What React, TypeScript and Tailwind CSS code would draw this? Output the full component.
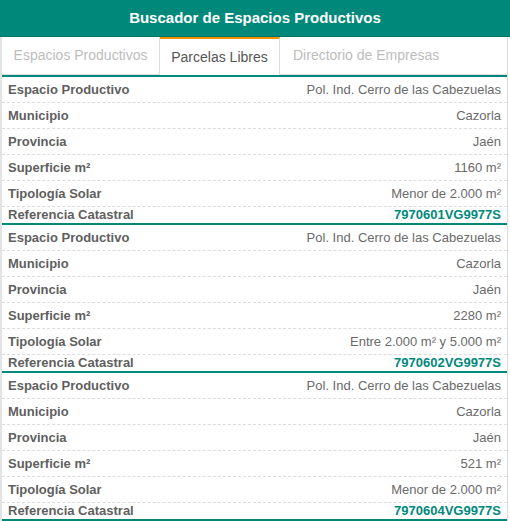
import React from "react";

type Parcela = {
  espacio: string;
  municipio: string;
  provincia: string;
  superficie: string;
  tipologia: string;
  referencia: string;
};

const parcelas: Parcela[] = [
  {
    espacio: "Pol. Ind. Cerro de las Cabezuelas",
    municipio: "Cazorla",
    provincia: "Jaén",
    superficie: "1160 m²",
    tipologia: "Menor de 2.000 m²",
    referencia: "7970601VG9977S",
  },
  {
    espacio: "Pol. Ind. Cerro de las Cabezuelas",
    municipio: "Cazorla",
    provincia: "Jaén",
    superficie: "2280 m²",
    tipologia: "Entre 2.000 m² y 5.000 m²",
    referencia: "7970602VG9977S",
  },
  {
    espacio: "Pol. Ind. Cerro de las Cabezuelas",
    municipio: "Cazorla",
    provincia: "Jaén",
    superficie: "521 m²",
    tipologia: "Menor de 2.000 m²",
    referencia: "7970604VG9977S",
  },
];

const Row = ({ label, value }: { label: string; value: string }) => (
  <div className="flex justify-between items-center h-[26px] pt-[1px] px-[6px] border-b border-dashed border-[#dcdcdc]">
    <span className="font-bold text-[#5f5f5f]">{label}</span>
    <span className="text-[#6a6a6a]">{value}</span>
  </div>
);

const ParcelaCard = ({ p }: { p: Parcela }) => (
  <div className="border-b-2 border-[#00897b]">
    <Row label="Espacio Productivo" value={p.espacio} />
    <Row label="Municipio" value={p.municipio} />
    <Row label="Provincia" value={p.provincia} />
    <Row label="Superficie m²" value={p.superficie} />
    <Row label="Tipología Solar" value={p.tipologia} />
    <div className="flex justify-between items-end h-[16px] px-[6px]">
      <span className="font-bold text-[#5f5f5f] leading-[16px]">Referencia Catastral</span>
      <span className="font-bold text-[#00897b] leading-[16px]">{p.referencia}</span>
    </div>
  </div>
);

export default function App() {
  return (
    <div
      className="w-[510px] h-[521px] overflow-hidden bg-white text-[13px]"
      style={{ fontFamily: '"Liberation Sans", Arial, sans-serif' }}
    >
      <div className="h-[37px] bg-[#00897b] border-b border-[#00766a] flex items-center justify-center text-white font-bold text-[15px]">
        Buscador de Espacios Productivos
      </div>
      <div className="border-l-2 border-[#e3e3e3] border-r border-r-[#dddddd] mr-[2px]">
        <div className="flex h-[40px] border-b-2 border-[#00897b] text-[14px]">
          <div className="w-[158px] flex items-center justify-center text-[#bdbdbd] border-r border-b border-[#dddddd]">
            Espacios Productivos
          </div>
          <div className="w-[120px] flex items-center justify-center text-[#555555] border-t-2 border-t-[#f39200] border-r border-[#dddddd]">
            Parcelas Libres
          </div>
          <div className="flex-1 flex items-center pl-[13px] text-[#bdbdbd] border-b border-[#dddddd]">
            Directorio de Empresas
          </div>
        </div>
        {parcelas.map((p, i) => (
          <ParcelaCard key={i} p={p} />
        ))}
      </div>
    </div>
  );
}
